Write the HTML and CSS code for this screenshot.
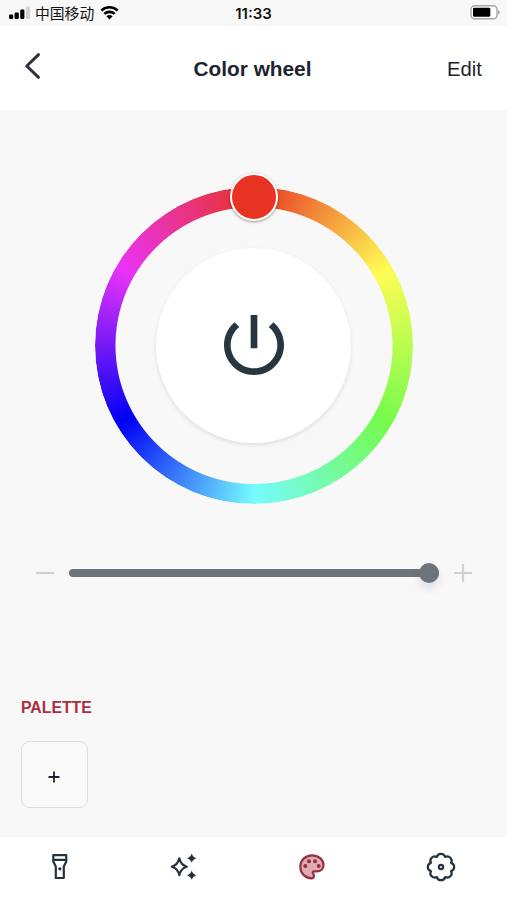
FILE: index.html
```html
<!DOCTYPE html>
<html lang="en">
<head>
  <meta charset="UTF-8">
  <meta name="viewport" content="width=device-width, initial-scale=1.0">
  <title>Color wheel</title>
  <link rel="stylesheet" href="styles.css">
</head>
<body>
  <div class="status-bar">
    <div class="carrier">
      <svg class="signal" width="21" height="14" viewBox="0 0 21 14">
        <rect x="0" y="8.5" width="4.2" height="4.5" rx="1.2"/>
        <rect x="5.6" y="6.5" width="4.2" height="6.5" rx="1.2"/>
        <rect x="11.2" y="3.5" width="4.2" height="9.5" rx="1.2"/>
        <rect class="off" x="17" y="0.5" width="4" height="12.5" rx="1.2"/>
      </svg>
      <span class="carrier-name">中国移动</span>
      <svg class="wifi" width="19" height="14" viewBox="0 0 19 14">
        <path d="M1.3 4.5A12 12 0 0 1 17.7 4.5M4.3 7.9A7.8 7.8 0 0 1 14.7 7.9" fill="none" stroke="#000" stroke-width="2.6"/>
        <path d="M6.4 10.2A4.8 4.8 0 0 1 12.6 10.2L9.5 13.4z"/>
      </svg>
    </div>
    <span class="clock">11:33</span>
    <svg class="battery" width="31" height="16" viewBox="0 0 31 16">
      <rect x="1" y="0.8" width="26" height="13" rx="3.6" fill="#fff" stroke="#a6a6a6" stroke-width="1.4"/>
      <rect x="3" y="2.8" width="17.3" height="9" rx="1.4"/>
      <path d="M28.2 4.8Q31.4 7.3 28.2 9.8z" fill="#a6a6a6"/>
    </svg>
  </div>

  <header class="header">
    <button class="back">
      <svg width="18" height="28" viewBox="0 0 18 28">
        <path d="M15.5 2.7L3.8 14L15.500 25.300" fill="none" stroke="#2b333d" stroke-width="3" stroke-linecap="round" stroke-linejoin="round"/>
      </svg>
    </button>
    <h1>Color wheel</h1>
    <button class="edit">Edit</button>
  </header>

  <main class="content">
    <div class="wheel">
      <div class="ring"></div>
      <button class="power">
        <svg width="80" height="80" viewBox="0 0 24 24">
          <path d="M13 3h-2v10h2V3zm4.83 2.17l-1.42 1.42C17.99 7.86 19 9.81 19 12c0 3.87-3.13 7-7 7s-7-3.13-7-7c0-2.19 1.01-4.14 2.58-5.42L6.17 5.17C4.23 6.82 3 9.26 3 12c0 4.97 4.03 9 9 9s9-4.03 9-9c0-2.74-1.23-5.18-3.17-6.83z"/>
        </svg>
      </button>
      <div class="handle"></div>
    </div>

    <div class="brightness">
      <svg width="18" height="18" viewBox="0 0 18 18"><path d="M0 9h18"/></svg>
      <div class="track"><div class="thumb"></div></div>
      <svg width="18" height="18" viewBox="0 0 18 18"><path d="M0 9h18M9 0v18"/></svg>
    </div>

    <section class="palette">
      <h2>PALETTE</h2>
      <button class="add">
        <svg width="12" height="12" viewBox="0 0 12 12"><path d="M0.5 6h11M6 0.5v11"/></svg>
      </button>
    </section>
  </main>

  <nav class="tabs">
    <button class="tab">
      <!-- flashlight -->
      <svg width="32" height="32" viewBox="0 0 32 32">
        <path d="M9.3 4.2h13v6.300l-2.500 5v11.500h-8V15.500l-2.500-5zM9.300 8.800h13"/>
        <circle class="dot" cx="15.800" cy="17.800" r="1.600"/>
      </svg>
    </button>
    <button class="tab">
      <!-- sparkles -->
      <svg width="32" height="32" viewBox="0 0 32 32">
        <path d="M11.300 7.300Q12.900 14.100 18.800 15.700Q12.900 17.300 11.300 24.100Q9.700 17.300 3.800 15.700Q9.700 14.100 11.300 7.300z"/>
        <path class="dot" d="M23.700 2.600Q24.800 6.200 28.400 7.200Q24.800 8.200 23.700 11.800Q22.600 8.200 19 7.200Q22.600 6.200 23.700 2.600zM23.700 19.600Q24.800 23.200 28.400 24.200Q24.800 25.200 23.700 28.800Q22.600 25.200 19 24.200Q22.600 23.200 23.700 19.600z"/>
      </svg>
    </button>
    <button class="tab active">
      <!-- palette -->
      <svg width="32" height="32" viewBox="0 0 32 32">
        <path d="M16 4.300C22.400 4.300 27.500 8.700 27.500 14.200C27.500 18 24.600 20.300 21 20.300H18.400C16.600 20.300 16.300 21.600 17.200 22.700C18.700 24.800 17.900 27.300 15.600 27.300C9 27.200 4.300 22.100 4.300 15.800C4.300 9.300 9.500 4.300 16 4.300z"/>
        <g class="dot">
          <circle cx="9.300" cy="15" r="2"/>
          <circle cx="13" cy="10.200" r="2"/>
          <circle cx="19" cy="10.200" r="2"/>
          <circle cx="22.700" cy="15" r="2"/>
        </g>
      </svg>
    </button>
    <button class="tab">
      <!-- settings -->
      <svg width="32" height="32" viewBox="0 0 32 32">
        <path d="M11.830 5.930A4.350 4.350 0 0 1 20.170 5.930A4.350 4.350 0 0 1 26.070 11.830A4.350 4.350 0 0 1 26.070 20.170A4.350 4.350 0 0 1 20.170 26.070A4.350 4.350 0 0 1 11.830 26.070A4.350 4.350 0 0 1 5.930 20.170A4.350 4.350 0 0 1 5.930 11.830A4.350 4.350 0 0 1 11.830 5.930z"/>
        <circle cx="16" cy="16" r="2.100"/>
      </svg>
    </button>
  </nav>
</body>
</html>
```
FILE: styles.css
```css
* {
  box-sizing: border-box;
  margin: 0;
  padding: 0;
}

body {
  display: flex;
  flex-direction: column;
  height: 100vh;
  overflow: hidden;
  background: #f8f8f8;
  color: #1c2430;
  font-family: "Liberation Sans", "Noto Sans CJK SC", sans-serif;
}

button {
  display: flex;
  align-items: center;
  justify-content: center;
  border: none;
  background: none;
  color: inherit;
  font: inherit;
  cursor: pointer;
}

svg {
  display: block;
}

/* status bar */
.status-bar {
  display: grid;
  grid-template-columns: 1fr auto 1fr;
  align-items: center;
  height: 26px;
  padding: 0 6px 0 9px;
  color: #111;
}

.carrier {
  display: flex;
  align-items: center;
}

.carrier-name {
  margin: 0 6px 0 5px;
  font: 14.8px/20px "Noto Sans CJK SC", sans-serif;
}

.signal .off {
  fill: #d2d2d2;
}

.clock {
  margin: 1px 3px 0 0;
  font: 600 15px/20px Inter, sans-serif;
}

.battery {
  justify-self: end;
}

/* header */
.header {
  display: grid;
  grid-template-columns: 1fr auto 1fr;
  align-items: center;
  height: 84px;
  padding: 2px 25px 0 23px;
  background: #fff;
}

.back {
  justify-self: start;
  margin-top: -6px;
}

.header h1 {
  font-size: 20.8px;
  line-height: 24px;
}

.edit {
  justify-self: end;
  font-size: 20.3px;
  line-height: 24px;
}

/* wheel */
.content {
  flex: 1;
  display: flex;
  flex-direction: column;
  padding: 76.5px 21px 0;
}

.wheel {
  position: relative;
  display: flex;
  align-items: center;
  justify-content: center;
  align-self: center;
  width: 318px;
  height: 317px;
  margin-left: 1px;
}

.ring {
  position: absolute;
  inset: 0;
  border-radius: 50%;
  background: conic-gradient(#e83323, #fffd54 60deg, #75fb4c 120deg, #75fbfd 180deg, #0000f5 240deg, #ea33f7 300deg, #e83323);
  -webkit-mask: radial-gradient(circle closest-side, transparent 138px, #000 139px);
  mask: radial-gradient(circle closest-side, transparent 138px, #000 139px);
}

.power {
  width: 195px;
  height: 195px;
  margin-right: 1px;
  border-radius: 50%;
  background: #fff;
  box-shadow: 0 2px 4px rgba(0, 0, 0, 0.1);
}

.power svg {
  margin-left: 1px;
  fill: #283640;
}

.handle {
  position: absolute;
  top: -14px;
  left: 135px;
  width: 48px;
  height: 48px;
  border: 2px solid #fff;
  border-radius: 50%;
  background: #e83323;
  box-shadow: 0 1px 3px rgba(0, 0, 0, 0.4);
}

/* brightness slider */
.brightness {
  display: flex;
  align-items: center;
  margin: 60px 14px 0 15px;
}

.brightness svg {
  fill: none;
  stroke: #d0d0d0;
  stroke-width: 2.2;
}

.track {
  flex: 1;
  display: flex;
  align-items: center;
  justify-content: flex-end;
  height: 8px;
  margin: 0 15px;
  border-radius: 4px;
  background: #6c757b;
}

.thumb {
  width: 20px;
  height: 20px;
  border-radius: 50%;
  background: #6c757b;
  box-shadow: 0 5px 9px rgba(60, 60, 100, 0.14);
}

/* palette */
.palette {
  margin-top: 116px;
}

.palette h2 {
  color: #ab2f3f;
  font-size: 15.8px;
  line-height: 20px;
}

.add {
  width: 67px;
  height: 67px;
  margin-top: 23px;
  padding: 5px 1px 0 0;
  border: 1.5px solid #dcdcdc;
  border-radius: 9px;
  background: #fafafa;
}

.add svg {
  fill: none;
  stroke: #1c2430;
  stroke-width: 1.8;
}

/* tab bar */
.tabs {
  display: grid;
  grid-template-columns: 124px 128px 129px 32px;
  justify-items: start;
  height: 63px;
  padding: 13.5px 50px 17.5px 44px;
  background: #fff;
}

.tab svg {
  fill: none;
  stroke: #26323b;
  stroke-width: 2.2;
  stroke-linejoin: round;
}

.tab .dot {
  fill: #26323b;
  stroke: none;
}

.tab.active svg {
  fill: #dfaab2;
  stroke: #923044;
}

.tab.active .dot {
  fill: #923044;
}
```
